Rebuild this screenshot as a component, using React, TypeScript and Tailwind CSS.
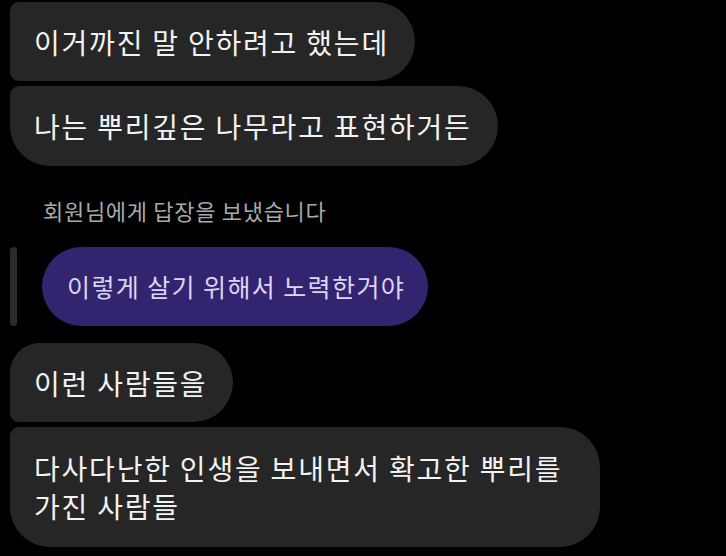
import React from "react";

const font = { fontFamily: '"Noto Sans CJK KR", "Noto Sans", sans-serif' };

export default function App() {
  return (
    <div
      className="w-[726px] h-[556px] bg-black overflow-hidden flex flex-col pl-[10px] pt-[2px]"
      style={font}
    >
      <div className="w-[405px] h-[79px] bg-[#262626] rounded-tl-[9px] rounded-bl-[9px] rounded-r-[40px] flex items-center pl-[24px] text-[28px] tracking-[1.8px] text-[#f2f2f2]">
        이거까진 말 안하려고 했는데
      </div>
      <div className="mt-[5px] w-[488px] h-[80px] bg-[#262626] rounded-tl-[9px] rounded-bl-[40px] rounded-r-[40px] flex items-center pl-[24px] text-[28px] tracking-[1.8px] text-[#f2f2f2]">
        나는 뿌리깊은 나무라고 표현하거든
      </div>
      <div className="mt-[32px] pl-[33px] h-[24px] flex items-center text-[22px] tracking-[0.7px] text-[#a9a9a9]">
        회원님에게 답장을 보냈습니다
      </div>
      <div className="mt-[25px] flex items-stretch gap-[25px] h-[79px]">
        <div className="w-[7px] rounded-full bg-[#2b2b2b]" />
        <div className="w-[386px] rounded-full bg-[#33246f] flex items-center pl-[25px] text-[25px] tracking-[1.4px] text-[#ddd5f5]">
          이렇게 살기 위해서 노력한거야
        </div>
      </div>
      <div className="mt-[17px] w-[223px] h-[79px] bg-[#262626] rounded-tl-[30px] rounded-bl-[9px] rounded-r-[40px] flex items-center pl-[24px] text-[28px] tracking-[1.8px] text-[#f2f2f2]">
        이런 사람들을
      </div>
      <div className="mt-[5px] w-[590px] h-[120px] bg-[#262626] rounded-tl-[9px] rounded-bl-[40px] rounded-r-[40px] flex flex-col justify-center pl-[24px] text-[28px] leading-[38px] tracking-[1.8px] text-[#f2f2f2]">
        <div>다사다난한 인생을 보내면서 확고한 뿌리를</div>
        <div>가진 사람들</div>
      </div>
    </div>
  );
}
